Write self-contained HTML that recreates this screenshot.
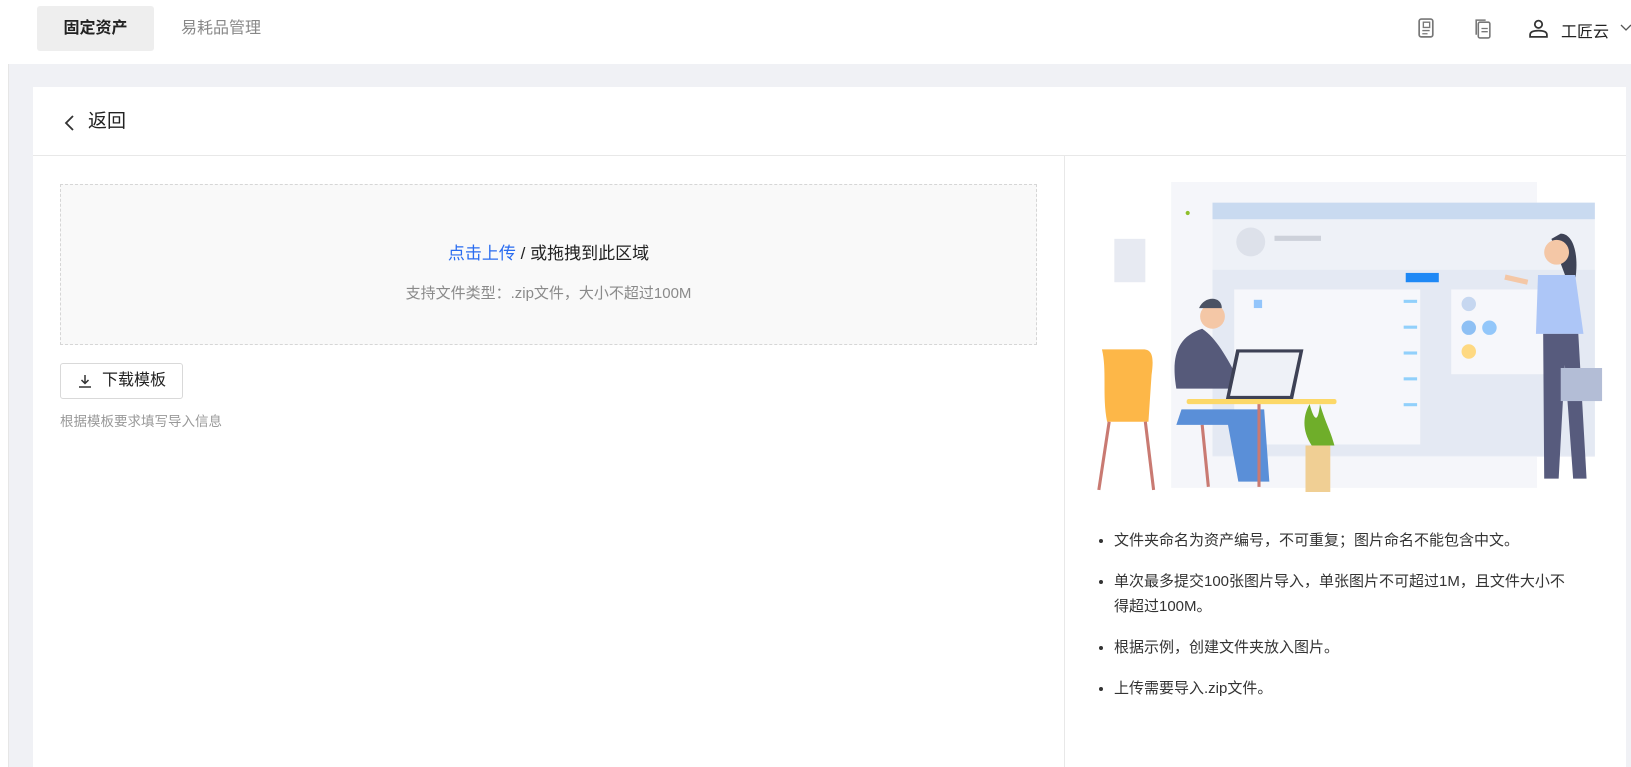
<!DOCTYPE html>
<html><head><meta charset="utf-8"><style>
*{margin:0;padding:0;box-sizing:border-box}
html,body{width:1631px;height:767px;overflow:hidden}
body{background:#f0f1f5;font-family:"Liberation Sans","Noto Sans CJK SC",sans-serif;position:relative}
.top{position:absolute;left:0;top:0;width:1631px;height:64px;background:#fff}
.tab1{position:absolute;left:37px;top:6px;width:117px;height:45px;background:#eeeeee;border-radius:3px;font-size:16px;font-weight:bold;color:#222;text-align:center;line-height:45px}
.tab2{position:absolute;left:181px;top:6px;height:45px;line-height:45px;font-size:16px;color:#888}
.lstrip{position:absolute;left:0;top:64px;width:9px;height:703px;background:#fff;border-right:1px solid #e6e6e6}
.card{position:absolute;left:33px;top:87px;width:1593px;height:680px;background:#fff}
.hdr{position:absolute;left:0;top:0;width:1593px;height:69px;border-bottom:1px solid #e8e8e8;font-size:19px;color:#222;line-height:70px;padding-left:55px}
.vline{position:absolute;left:1031px;top:69px;width:1px;height:611px;background:#e8e8e8}
.drop{position:absolute;left:27px;top:97px;width:977px;height:161px;border:1px dashed #d6d6d6;background:#f9f9f9;text-align:center}
.btn{position:absolute;left:27px;top:276px;width:123px;height:36px;border:1px solid #d9d9d9;border-radius:3px;font-size:16px;color:#222;line-height:34px;padding-left:41px}
ul{position:absolute;left:1048px;top:441px;width:494px;font-size:15px;color:#333;line-height:25px;padding-left:33px}
li{margin-bottom:16px}
</style></head><body>
<div class="top">
<div class="tab1">固定资产</div><div class="tab2">易耗品管理</div>
<svg style="position:absolute;left:1418px;top:18px" width="17" height="21" viewBox="0 0 16 20"><rect x="1" y="1" width="13" height="17" rx="2" fill="none" stroke="#777" stroke-width="1.6"/><rect x="5" y="4" width="6" height="5" fill="none" stroke="#777" stroke-width="1.3"/><path d="M4 12h7M4 15h5" stroke="#777" stroke-width="1.3"/></svg>
<svg style="position:absolute;left:1473px;top:18px" width="19" height="21" viewBox="0 0 18 20"><path d="M3 16V2h9" fill="none" stroke="#777" stroke-width="1.5"/><rect x="5" y="4" width="11" height="15" rx="1.5" fill="none" stroke="#777" stroke-width="1.5"/><path d="M8 10h6M8 13h6" stroke="#777" stroke-width="1.3"/></svg>
<svg style="position:absolute;left:1528px;top:18px" width="21" height="21" viewBox="0 0 20 20"><circle cx="10" cy="6" r="3.5" fill="none" stroke="#333" stroke-width="1.7"/><path d="M2 18v-2c0-3 4-4 8-4s8 1 8 4v2z" fill="none" stroke="#333" stroke-width="1.7"/></svg>
<div style="position:absolute;left:1561px;top:18px;font-size:16px;color:#222;white-space:nowrap">工匠云</div>
<svg style="position:absolute;left:1620px;top:24px" width="12" height="8"><path d="M1 1l5 5 5-5" fill="none" stroke="#555" stroke-width="1.3"/></svg>
</div>
<div class="lstrip"></div>
<div class="card">
<div class="hdr"><svg style="position:absolute;left:31px;top:28px" width="12" height="16"><path d="M9 1L2 8l7 7" fill="none" stroke="#333" stroke-width="1.8"/></svg>返回</div>
<div class="vline"></div>
<div class="drop"><div style="margin-top:54px;font-size:17px;color:#222"><span style="color:#2a6cf0">点击上传</span> / 或拖拽到此区域</div><div style="margin-top:18px;font-size:15px;color:#8a8a8a">支持文件类型：.zip文件，大小不超过100M</div></div>
<div class="btn"><svg style="position:absolute;left:17px;top:10px" width="14" height="14"><path d="M7 1v8M3.5 6L7 9.5 10.5 6M1 13h12" fill="none" stroke="#333" stroke-width="1.5"/></svg>下载模板</div>
<div style="position:absolute;left:27px;top:323px;font-size:13.5px;color:#999">根据模板要求填写导入信息</div>
<svg style="position:absolute;left:1059px;top:95px" width="520" height="310" viewBox="0 0 500 300">
<rect x="75" y="0" width="354" height="296" fill="#f5f6fa"/>
<rect x="115" y="20" width="370" height="246" fill="#eef1f7"/>
<rect x="115" y="20" width="370" height="16" fill="#c9daf0"/>
<circle cx="152" cy="58" r="14" fill="#dde1ea"/>
<rect x="175" y="52" width="45" height="5" fill="#cdd1da"/>
<rect x="115" y="85" width="370" height="180" fill="#e4e9f3"/>
<rect x="302" y="88" width="32" height="9" fill="#1e88f5"/>
<rect x="136" y="104" width="180" height="150" fill="#f6f7fb"/>
<rect x="346" y="104" width="108" height="82" fill="#f6f7fb"/>
<rect x="155" y="114" width="8" height="8" fill="#93c5fb"/>
<rect x="153" y="206" width="8" height="8" fill="#8fcc2f"/>
<rect x="155" y="238" width="8" height="8" fill="#14b8d8"/>
<g fill="#91d0fb"><rect x="300" y="114" width="13" height="3"/><rect x="300" y="139" width="13" height="3"/><rect x="300" y="164" width="13" height="3"/><rect x="300" y="189" width="13" height="3"/><rect x="300" y="214" width="13" height="3"/></g>
<circle cx="363" cy="118" r="7" fill="#c6d7f0"/><circle cx="363" cy="141" r="7" fill="#8ec0f4"/><circle cx="383" cy="141" r="7" fill="#93c7fa"/><circle cx="363" cy="164" r="7" fill="#fed982"/>
<rect x="20" y="55" width="30" height="42" fill="#e7eaf2"/>
<circle cx="91" cy="30" r="2" fill="#8fbf2c"/>
<path d="M8 162h40c10 0 10 10 8 25l-3 45H13c-5-25 0-50-5-70z" fill="#fdb748"/>
<path d="M15 232l-10 66M50 232l8 66M105 235l6 60" stroke="#c97a72" stroke-width="3"/>
<path d="M80 200c-5-30 0-50 25-58 15 10 25 30 40 58z" fill="#565a7a"/>
<path d="M80 235h50l10 55h30l-5-70H85z" fill="#5a8fd8"/>
<circle cx="115" cy="130" r="12" fill="#f4c7a6"/><path d="M102 122c5-12 22-12 22 0z" fill="#4b5263"/>
<path d="M128 210l10-48h65l-10 48z" fill="#3d4155"/><path d="M132 207l9-42h58l-9 42z" fill="#eef1f7"/>
<rect x="90" y="210" width="145" height="5" rx="2" fill="#fcd868"/>
<path d="M160 215v80" stroke="#c97a72" stroke-width="3"/>
<path d="M205 300v-45h24v45z" fill="#f0cf94"/><path d="M211 255c-10-15-8-30-2-40 4 15 8 20 10 0 6 20 10 25 14 40z" fill="#6fae2a"/>
<path d="M452 50c12 0 18 20 14 45h-8l-15-40z" fill="#3e4356"/>
<circle cx="448" cy="68" r="12" fill="#f4c7a6"/>
<path d="M430 90h36l8 57h-46z" fill="#adc6f7"/>
<path d="M435 147h34l8 140h-13l-8-110-6 110h-14z" fill="#575b7d"/>
<rect x="452" y="180" width="40" height="32" fill="#b3bdd6"/>
<path d="M420 97l-22-5" stroke="#f4c7a6" stroke-width="5"/>
</svg>
<ul><li>文件夹命名为资产编号，不可重复；图片命名不能包含中文。</li><li>单次最多提交100张图片导入，单张图片不可超过1M，且文件大小不得超过100M。</li><li>根据示例，创建文件夹放入图片。</li><li>上传需要导入.zip文件。</li></ul>
</div>
</body></html>
